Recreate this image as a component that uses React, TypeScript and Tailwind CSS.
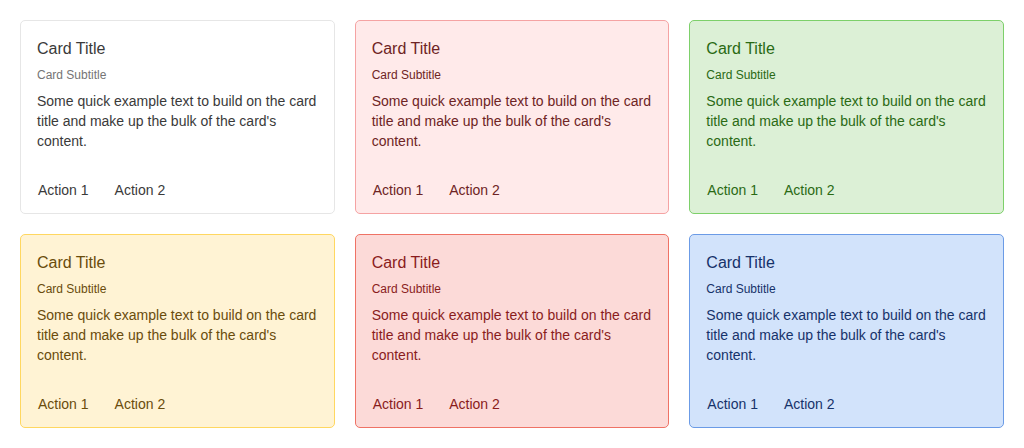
import React from "react";

type Variant = {
  card: string;
  title: string;
  sub: string;
  body: string;
};

const variants: Variant[] = [
  { card: "bg-white border-[#e6e6e6]", title: "text-[#3a3a3a]", sub: "text-[#757575]", body: "text-[#3a3a3a]" },
  { card: "bg-[#ffeaea] border-[#f5a3a3]", title: "text-[#6e2424]", sub: "text-[#6e2424]", body: "text-[#6e2424]" },
  { card: "bg-[#dcf0d6] border-[#7dd06a]", title: "text-[#2a6a14]", sub: "text-[#2a6a14]", body: "text-[#2a6a14]" },
  { card: "bg-[#fff3d4] border-[#ffd760]", title: "text-[#6a4c0c]", sub: "text-[#6a4c0c]", body: "text-[#6a4c0c]" },
  { card: "bg-[#fcdad8] border-[#ef7265]", title: "text-[#8a1c1c]", sub: "text-[#8a1c1c]", body: "text-[#8a1c1c]" },
  { card: "bg-[#d2e3fb] border-[#6b9be6]", title: "text-[#16326a]", sub: "text-[#16326a]", body: "text-[#16326a]" },
];

function Card({ v }: { v: Variant }) {
  return (
    <div className={`border rounded-[5px] px-4 pt-[17px] pb-[13px] flex flex-col ${v.card}`}>
      <div className={`text-[16px] leading-[22px] ${v.title}`}>Card Title</div>
      <div className={`text-[12px] leading-[16px] mt-[7px] ${v.sub}`}>Card Subtitle</div>
      <p className={`text-[14px] leading-[20px] mt-[8px] ${v.body}`}>
        Some quick example text to build on the card title and make up the bulk of the card's content.
      </p>
      <div className={`flex gap-[26px] mt-[29px] ml-px text-[14px] leading-[20px] ${v.body}`}>
        <span>Action 1</span>
        <span>Action 2</span>
      </div>
    </div>
  );
}

export default function App() {
  return (
    <div
      className="w-[1024px] h-[448px] bg-white p-5"
      style={{ fontFamily: '"Liberation Sans", Arial, sans-serif' }}
    >
      <div className="grid grid-cols-3 gap-x-5 gap-y-5">
        {variants.map((v, i) => (
          <Card key={i} v={v} />
        ))}
      </div>
    </div>
  );
}
